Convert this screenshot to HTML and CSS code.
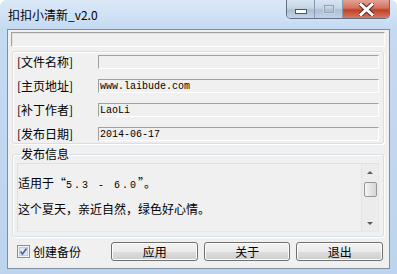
FILE: index.html
```html
<!DOCTYPE html>
<html lang="zh-CN">
<head>
    <meta charset="UTF-8">
    <title>扣扣小清新_v2.0</title>
    <link rel="stylesheet" href="styles.css">
</head>
<body>
    <div class="window">
        <div class="titlebar">
            <span class="title">扣扣小清新_v2.0</span>
            <div class="caption-buttons">
                <div class="cap min"><span class="min-bar"></span></div>
                <div class="cap max"><span class="max-box"></span></div>
                <div class="cap close">
                    <svg width="15" height="13" viewBox="0 0 15 13">
                        <path d="M2 1.5 L13 11.5 M13 1.5 L2 11.5" stroke="#5a2a22" stroke-width="5" stroke-linecap="square"/>
                        <path d="M2 1.5 L13 11.5 M13 1.5 L2 11.5" stroke="#ffffff" stroke-width="3" stroke-linecap="square"/>
                    </svg>
                </div>
            </div>
        </div>

        <div class="client">
            <div class="status-field"></div>

            <div class="group info-group">
                <span class="label">[文件名称]</span>
                <div class="field"></div>
                <span class="label">[主页地址]</span>
                <div class="field">www.laibude.com</div>
                <span class="label">[补丁作者]</span>
                <div class="field">LaoLi</div>
                <span class="label">[发布日期]</span>
                <div class="field">2014-06-17</div>
            </div>

            <fieldset class="notes-group">
                <legend>发布信息</legend>
                <div class="notes">
                    <div class="notes-text">
                        <p>适用于“<span class="mono">5.3 - 6.0</span>”。</p>
                        <p>这个夏天，亲近自然，绿色好心情。</p>
                    </div>
                    <div class="scrollbar">
                        <span class="arrow up"></span>
                        <span class="thumb"></span>
                        <span class="arrow down"></span>
                    </div>
                </div>
            </fieldset>

            <div class="actions">
                <label class="check">
                    <svg width="13" height="13" viewBox="0 0 13 13">
                        <rect x="0.5" y="0.5" width="12" height="12" fill="#f4f4f4" stroke="#8e8f8f"/>
                        <rect x="2.5" y="2.5" width="8" height="8" fill="#e2e5e9" stroke="#c4c9d0"/>
                        <path d="M3.5 6.5 L5.5 9 L9.5 3.5" fill="none" stroke="#3b5fb0" stroke-width="1.6"/>
                    </svg>
                    创建备份
                </label>
                <button class="btn">应用</button>
                <button class="btn">关于</button>
                <button class="btn">退出</button>
            </div>
        </div>
    </div>
</body>
</html>
```

FILE: styles.css
```css
body {
    margin: 0;
    font-family: "Noto Sans CJK SC", "Liberation Sans", sans-serif;
    font-size: 12px;
    color: #000000;
    background: #ffffff;
}

.window {
    width: 397px;
    height: 274px;
    box-sizing: border-box;
    background: linear-gradient(180deg, #dbe9f7 0px, #c4daf1 30px, #bcd4ee 100%);
    border-radius: 6px 6px 0 0;
    display: flex;
    flex-direction: column;
}

.titlebar {
    height: 29px;
    display: flex;
    justify-content: space-between;
    align-items: flex-start;
}

.title {
    margin: 7px 0 0 8px;
    line-height: 16px;
}

.caption-buttons {
    display: flex;
    margin-right: 7px;
    border: 1px solid #5e6f86;
    border-top: none;
    border-radius: 0 0 5px 5px;
    overflow: hidden;
}

.cap {
    height: 18px;
    display: flex;
    align-items: center;
    justify-content: center;
}

.min,
.max {
    width: 27px;
    background: linear-gradient(180deg, #d8e4f1 0%, #c6d5e6 45%, #aebfd3 55%, #c2d3e6 100%);
    border-right: 1px solid #8899ae;
}

.min-bar {
    width: 10px;
    height: 3px;
    margin-top: 4px;
    background: #ffffff;
    border: 1px solid #46586e;
}

.max-box {
    width: 8px;
    height: 6px;
    border: 1px solid #93a5ba;
    outline: 1px solid #c8d5e3;
}

.close {
    width: 46px;
    background: linear-gradient(180deg, #e3a296 0%, #d4705c 45%, #c2402a 55%, #d47a5e 100%);
}

.client {
    margin: 0 7px 5px 7px;
    flex: 1;
    border: 1px solid #7f90a4;
    background: #f0f0f0;
    display: flex;
    flex-direction: column;
    padding: 2px 4px 0 3px;
}

.status-field {
    height: 13px;
    border: 1px solid;
    border-color: #a0a0a0 #ffffff #ffffff #a0a0a0;
    box-shadow: inset 1px 1px 0 #e3e3e3;
}

.group {
    margin: 4px 1px 0 1px;
    border: 1px solid #d5dfe5;
    border-radius: 3px;
    box-shadow: inset 1px 1px 0 #ffffff, 1px 1px 0 #ffffff;
}

.info-group {
    display: grid;
    grid-template-columns: 81px 1fr;
    row-gap: 10px;
    padding: 3px 4px 2px 4px;
    align-items: center;
}

.label {
    line-height: 14px;
}

.field {
    height: 12px;
    border: 1px solid;
    border-color: #a0a0a0 #ffffff #ffffff #a0a0a0;
    font-family: "Liberation Mono", monospace;
    font-size: 10px;
    line-height: 13px;
    padding-left: 1px;
}

.notes-group {
    margin: 4px 1px 0 1px;
    padding: 3px 4px 4px 4px;
    border: 1px solid #d5dfe5;
    border-radius: 3px;
    box-shadow: inset 1px 1px 0 #ffffff, 1px 1px 0 #ffffff;
}

.notes-group legend {
    padding: 0 1px;
    margin-left: 3px;
    line-height: 12px;
}

.notes {
    height: 69px;
    display: flex;
    border: 1px solid;
    border-color: #e0e0e0 #e8e8e8 #e8e8e8 #e0e0e0;
    box-sizing: border-box;
}

.notes-text {
    flex: 1;
    padding: 12px 0 0 0;
}

.notes-text p {
    margin: 0 0 12px 0;
    height: 14px;
    line-height: 14px;
}

.mono {
    font-family: "Liberation Mono", monospace;
    font-size: 10px;
    line-height: 14px;
    letter-spacing: 2px;
}

.scrollbar {
    width: 16px;
    display: flex;
    flex-direction: column;
    align-items: center;
    background: #ececec;
    border-left: 1px solid #e4e4e4;
}

.arrow {
    width: 0;
    height: 0;
    border-left: 3px solid transparent;
    border-right: 3px solid transparent;
}

.arrow.up {
    margin-top: 7px;
    border-bottom: 3px solid #5a5a5a;
}

.arrow.down {
    margin-top: auto;
    margin-bottom: 6px;
    border-top: 3px solid #5a5a5a;
}

.thumb {
    margin-top: 8px;
    width: 13px;
    height: 15px;
    box-sizing: border-box;
    border: 1px solid #979797;
    border-radius: 2px;
    background: linear-gradient(90deg, #f5f5f5 0%, #e4e4e4 50%, #d6d6d6 100%);
}

.actions {
    margin-top: 5px;
    display: flex;
    align-items: center;
    gap: 6px;
    padding-right: 2px;
}

.check {
    display: flex;
    align-items: center;
    gap: 3px;
    width: 89px;
    margin-left: 6px;
}

.btn {
    width: 87px;
    height: 19px;
    padding: 0;
    font-family: "Noto Sans CJK SC", sans-serif;
    font-size: 12px;
    line-height: 15px;
    border: 1px solid #707070;
    border-radius: 3px;
    background: linear-gradient(180deg, #f2f2f2 0%, #ebebeb 50%, #dddddd 51%, #cfcfcf 100%);
    box-shadow: inset 0 0 0 1px #fcfcfc;
}
```
